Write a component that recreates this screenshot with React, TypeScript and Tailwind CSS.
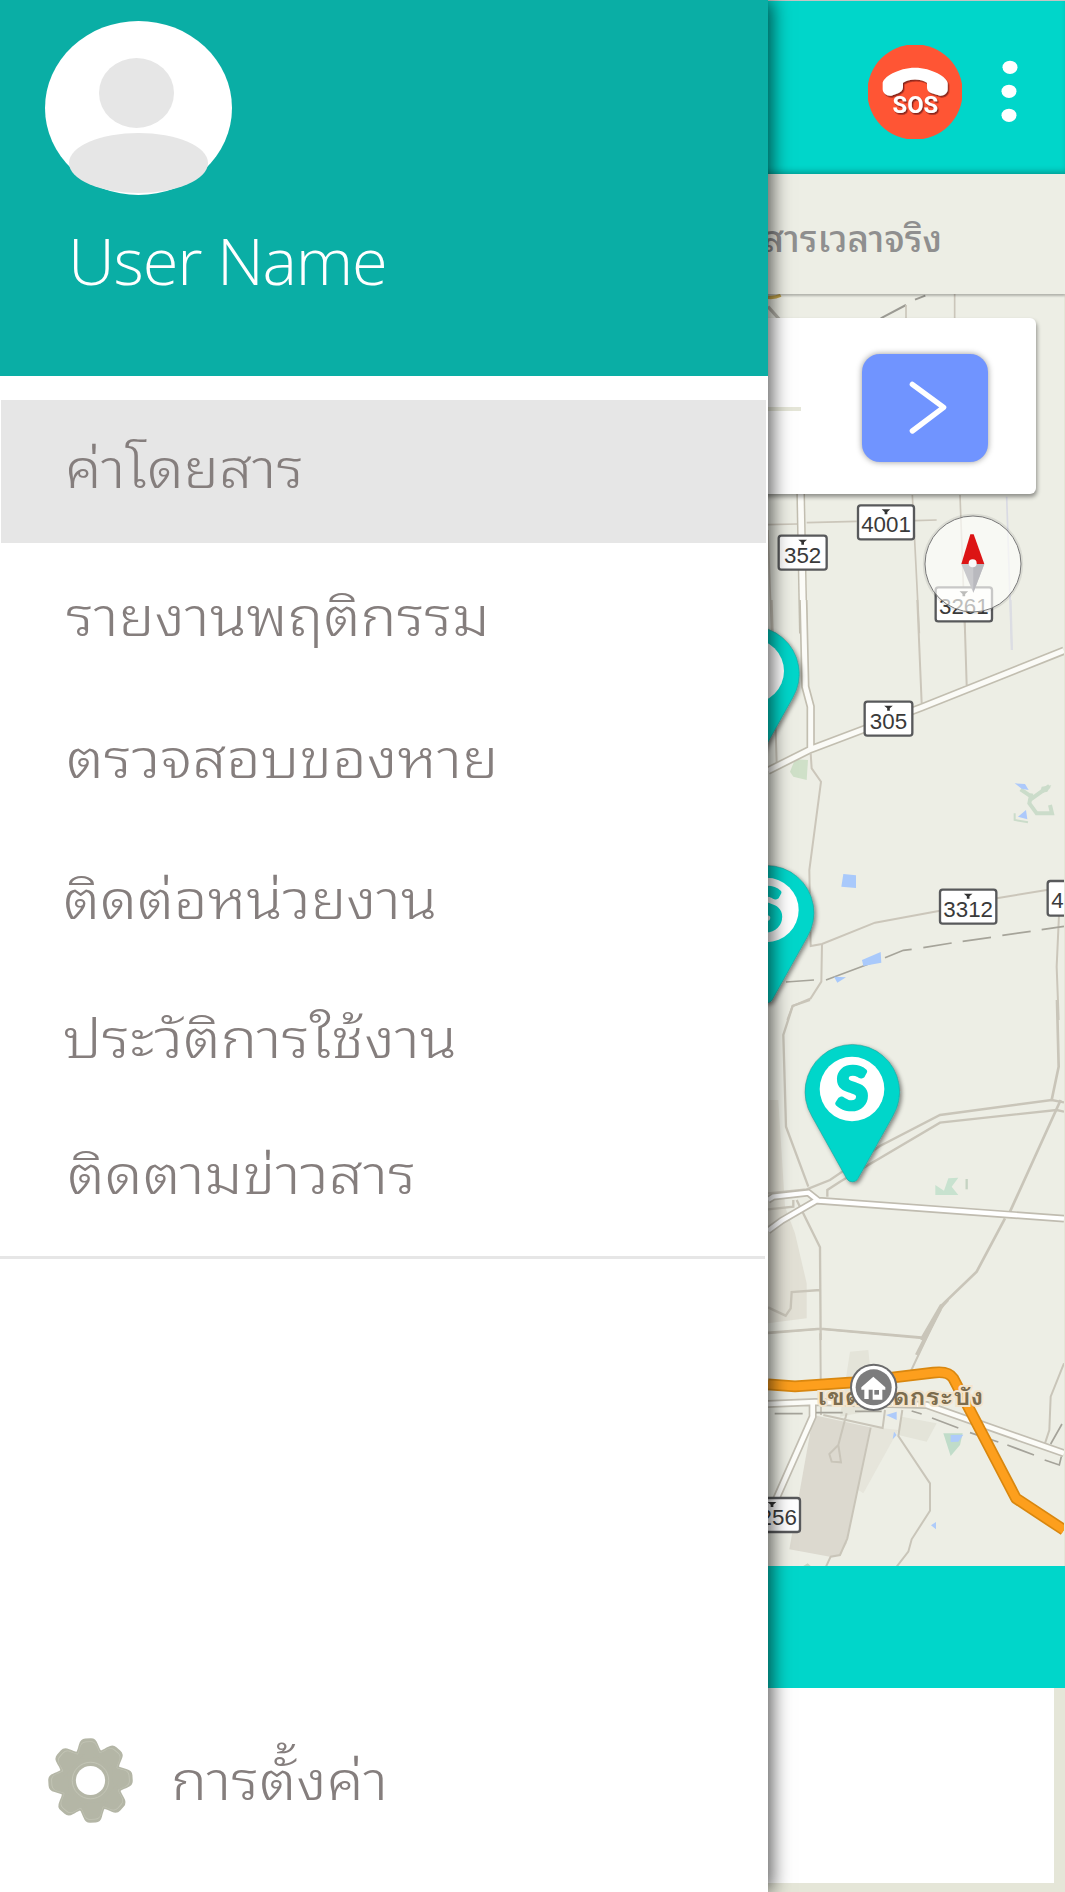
import React from "react";

type MenuItem = { label: string; row: string; text: string };

const items: MenuItem[] = [
  { label: "ค่าโดยสาร", row: "h-[143px] mx-[1px] w-[765px] bg-[#e6e6e6] pl-[64px]", text: "scale-x-[1.1]" },
  { label: "รายงานพฤติกรรม", row: "h-[153px] pl-[66px]", text: "scale-x-[1.121]" },
  { label: "ตรวจสอบของหาย", row: "h-[131px] pl-[66px]", text: "scale-x-[1.132]" },
  { label: "ติดต่อหน่วยงาน", row: "h-[151px] pl-[63px]", text: "scale-x-[1.107]" },
  { label: "ประวัติการใช้งาน", row: "h-[127px] pl-[63px]", text: "scale-x-[1.131]" },
  { label: "ติดตามข่าวสาร", row: "h-[145px] pl-[67px]", text: "scale-x-[1.134]" },
];

function Shield({ x, y, w, label }: { x: number; y: number; w: number; label: string }) {
  return (
    <g transform={`translate(${x} ${y})`}>
      <rect x="2" y="2" width={w - 4} height="102" rx="8" fill="#fff" stroke="#58595b" strokeWidth="7" />
      <path d={`M${w / 2 - 13} 14h26l-9 8v7h-8v-7z`} fill="#333" />
      <text x={w / 2} y="83" textAnchor="middle" fontSize="67" fill="#3a3a3a" className="font-['Liberation_Sans']">
        {label}
      </text>
    </g>
  );
}

function Pin({ x, y, letter }: { x: number; y: number; letter?: string }) {
  return (
    <g transform={`translate(${x} ${y})`}>
      <path
        d="M0 270q-11 0-17-10L-122 72A142 142 0 1 1 122 72L17 260Q11 270 0 270Z"
        fill="#00d6ca"
        stroke="#2b8f89"
        strokeWidth="1.5"
        filter="url(#pinShadow)"
      />
      <circle cx="-1" cy="-9" r="97" fill="#fff" />
      {letter && (
        <text
          x="-1"
          y="52"
          textAnchor="middle"
          fontSize="172"
          fill="#00d6ca"
          stroke="#00d6ca"
          strokeWidth="14"
          strokeLinejoin="round"
          className="font-['Lato'] font-bold"
        >
          {letter}
        </text>
      )}
    </g>
  );
}

function MapCanvas() {
  return (
    <svg className="absolute right-px top-0 h-[1272px] w-[324px]" viewBox="740 294 324 1272" fill="none">
      <defs>
        <filter id="pinShadow" x="-20%" y="-20%" width="140%" height="140%">
          <feDropShadow dx="6" dy="6" stdDeviation="6" floodColor="#000" floodOpacity="0.45" />
        </filter>
      </defs>
      <rect x="740" y="294" width="324" height="1272" fill="#edeee5" />

      {/* northern section */}
      <g transform="translate(740 300) scale(0.33333)" stroke="#cbc6ba" strokeWidth="5">
        <path d="M84 -8Q105 -6 122 -14" stroke="#c9a94e" strokeWidth="10" />
        <path d="M84 20L120 60" strokeWidth="10" stroke="#b5b3aa" />
        <path d="M422 55L498 15M525 -1L556 -13M462 -5" stroke="#9b9a93" strokeWidth="6" />
        <path d="M498 15V60M644 -20V60M462 22" />
        <path d="M84 674L172 672M200 668L350 664M524 662L590 660" />
        <path d="M517 585L528 800L538 1000M660 585L668 800L675 1000M84 690L95 1000" />
        <path d="M800 590L815 1050" stroke="#d9dae3" />
        <path d="M182 580L190 1000" stroke="#c2beb0" strokeWidth="26" />
        <path d="M182 580L190 1000" stroke="#fbfbf7" strokeWidth="17" />
      </g>

      {/* middle section */}
      <g transform="translate(740 600) scale(0.33333)" stroke="#cbc6ba" strokeWidth="6">
        <path d="M150 515L165 478L204 480L200 540L160 530Z" fill="#cfe0c8" stroke="none" />
        <path d="M95 0L110 490M532 0L545 310M674 60L680 255" />
        <path d="M812 0L816 150" stroke="#dcdde3" />
        <path d="M190 0L196 260L212 320V440M84 512L212 448L545 322L972 152" stroke="#c2beb0" strokeWidth="25" />
        <path d="M190 0L196 260L212 320V445M84 512L212 448L545 322L972 152" stroke="#fbfbf7" strokeWidth="15" />
        <path d="M212 460L215 505L243 545L208 810L212 1038L246 1032L405 968L600 932M770 895L920 870L972 866M246 1032L244 1145L212 1195L158 1218L142 1260" />
        <path d="M957 945L950 1100L956 1260" />
        <path d="M138 1146L222 1140M258 1140L410 1083M435 1073L490 1051L515 1048M550 1043L635 1029M668 1024L753 1012M787 1006L872 994M905 989L972 979" stroke="#a6a49a" strokeWidth="5" />
        <g stroke="none">
          <path d="M310 822L348 826V864L304 860ZM366 1080L422 1056L424 1088L370 1098ZM282 1130L318 1132L292 1148Z" fill="#a9c9fb" />
        </g>
        <path d="M842 568L874 590M872 598L928 558M874 580L868 610L890 640L936 640L930 615" stroke="#cbdcca" strokeWidth="12" />
        <path d="M905 560L934 556L922 575L900 580Z" fill="#cbdcca" stroke="none" />
        <path d="M824 640V660L864 667" stroke="#cbdcca" />
        <path d="M824 550L855 552L866 570L845 566ZM858 630L862 658L834 650Z" fill="#adc9fb" stroke="none" />
      </g>

      {/* lower-middle section */}
      <g transform="translate(740 1000) scale(0.33333)" stroke="#c9c5b9" strokeWidth="7">
        <path d="M84 300H115L135 620L165 700L200 850V955L84 970Z" fill="#e2e0d5" stroke="none" />
        <path d="M210 0L158 18L130 105L138 380L205 560M84 580L200 568L270 540L420 438L600 345L935 300L972 307M262 590V570L300 545L600 368L950 330L972 335" />
        <path d="M951 0L956 200L935 300M962 300L810 635M795 655L710 815L606 915L545 1020" strokeWidth="8" />
        <path d="M606 915L545 1020" strokeWidth="13" />
        <path d="M170 600L240 742L242 1020M240 870L155 876L152 925L137 947L84 922M84 998L242 986L545 1012M84 628L160 620V600" />
        <path d="M84 600L100 590L205 578L235 602L972 656M84 692L125 662L235 598" stroke="#c0bcb0" strokeWidth="23" />
        <path d="M84 600L100 590L205 578L235 602L972 656M84 692L125 662L235 598" stroke="#fff" strokeWidth="13" />
        <path d="M586 555L612 572L625 535L655 533L635 560L655 585H586Z" fill="#c8e2cf" stroke="none" />
        <path d="M680 537V568" stroke="#c5d3c2" />
      </g>

      {/* southern section */}
      <g transform="translate(740 1300) scale(0.33333)" stroke="#c9c5b9" strokeWidth="6">
        <g stroke="none">
          <path d="M330 155L385 150L390 200L405 330L300 350Z" fill="#e4e4d9" />
          <path d="M390 380L475 390L370 580L340 560Z" fill="#e6e5db" />
          <path d="M485 350L590 370L560 425L475 405Z" fill="#e4e4d9" />
          <path d="M220 345L390 382L320 730L300 765L270 770L148 748Z" fill="#dcd9cf" />
          <path d="M190 798L203 790L212 798Z" fill="#c9d3c0" />
        </g>
        <path d="M241 100L243 345M84 100L242 87L540 114M625 0L600 28L500 240M487 330L475 408L570 550V632L515 718L505 755L470 800M972 190L932 290L928 390L915 430" />
        <path d="M320 340L295 435L268 462L275 485L303 487L295 435M250 345L428 384L435 330M392 383L322 715L300 765L272 770L258 800" />
        <path d="M600 28L530 165" strokeWidth="11" />
        <path d="M84 312L225 306L560 315L972 460M218 300V350L105 605L84 690" stroke="#c2beb2" strokeWidth="24" />
        <path d="M84 312L225 306L560 315L972 460M218 300V350L105 605L84 690" stroke="#fcfcf8" strokeWidth="14" />
        <path d="M104 341H188M228 338H308M345 334H425M515 333L545 342M576 354L655 384M690 398L775 426M802 435L882 465M914 480L958 495L964 470M932 432L966 372" stroke="#a5a39a" strokeWidth="5" />
        <g stroke="none">
          <path d="M610 400L668 400L660 435L632 468Z" fill="#c0dcc9" />
          <path d="M632 405L670 404L655 425L632 426ZM438 345L470 335V360ZM462 395L470 405L458 418ZM573 676L588 666V688Z" fill="#aecbfa" />
        </g>
        <path d="M84 253L165 259L340 247L580 218Q625 212 640 235L700 350L828 595L972 690" stroke="#d9870f" strokeWidth="35" strokeLinejoin="round" />
        <path d="M84 253L165 259L340 247L580 218Q625 212 640 235L700 350L828 595L972 690" stroke="#fd9f1d" strokeWidth="25" strokeLinejoin="round" />
      </g>

      <text
        x="818"
        y="1405"
        fontSize="23"
        textLength="165"
        lengthAdjust="spacingAndGlyphs"
        fill="#7c6c4e"
        stroke="#f3e4cc"
        strokeWidth="4"
        paintOrder="stroke"
        className="font-['Loma','Noto_Sans_Thai',sans-serif] font-bold"
      >
        เขตลาดกระบัง
      </text>

      <g transform="translate(740 1300) scale(0.33333)">
        <circle cx="401" cy="262" r="71" fill="#6b6b6c" />
        <circle cx="401" cy="262" r="65" fill="#fff" />
        <circle cx="401" cy="262" r="54" fill="#7c7c7d" />
        <path d="M400 230L364 262V269H373V297H386V269H398V299H427V269H436V262Z" fill="#fff" />
        <path d="M403 270H417V284H403Z" fill="#7c7c7d" />
        <Shield x={10} y={592} w={172} label="3256" />
      </g>

      <g transform="translate(740 300) scale(0.33333)">
        <Shield x={352} y={614} w={172} label="4001" />
        <Shield x={114} y={705} w={148} label="352" />
        <Shield x={585} y={860} w={173} label="3261" />
        <circle cx="699" cy="792" r="147" fill="none" stroke="#000" strokeOpacity="0.08" strokeWidth="7" />
        <circle cx="699" cy="792" r="144" fill="#fdfefa" fillOpacity="0.68" stroke="#777" strokeWidth="3" />
        <path d="M664 792L700 878L733 792Z" fill="#c9c9cc" />
        <path d="M700 792V878L733 792Z" fill="#b9b9be" />
        <path d="M691 703H701L733 792H664Z" fill="#dc1414" />
        <circle cx="698" cy="790" r="12" fill="#fafafa" />
      </g>
      <g transform="translate(740 600) scale(0.33333)">
        <Shield x={372} y={303} w={147} label="305" />
        <Shield x={598} y={867} w={173} label="3312" />
        <g>
          <rect x="923" y="843" width="100" height="104" rx="8" fill="#fff" stroke="#58595b" strokeWidth="7" />
          <text x="934" y="924" fontSize="67" fill="#3a3a3a" className="font-['Liberation_Sans']">4</text>
        </g>
        <Pin x={36} y={222} />
        <Pin x={80} y={939} letter="S" />
      </g>
      <g transform="translate(740 1000) scale(0.33333)">
        <Pin x={337} y={276} letter="S" />
      </g>
    </svg>
  );
}

function SosIcon() {
  return (
    <svg className="h-[94px] w-[94px]" viewBox="384 135 282 282">
      <defs>
        <filter id="sosShadow" x="-20%" y="-20%" width="150%" height="150%">
          <feDropShadow dx="4" dy="5" stdDeviation="2" floodColor="#5a1408" floodOpacity="0.7" />
        </filter>
      </defs>
      <circle cx="525" cy="276" r="143" fill="#ff5534" />
      <g fill="#fff" filter="url(#sosShadow)">
        <path d="M428 250C428 232 475 203 525 203C575 203 623 232 623 250V268C623 281 610 288 600 287L576 280C565 277 561 270 561 262V248C540 235 510 235 489 248V262C489 270 482 277 474 280L454 287C441 289 428 280 428 268Z" />
        <text x="526" y="340" textAnchor="middle" fontSize="71" className="font-['Roboto'] font-bold">SOS</text>
      </g>
    </svg>
  );
}

function Avatar() {
  return (
    <svg className="h-[174px] w-[187px]" viewBox="135 63 561 522">
      <ellipse cx="415.5" cy="324" rx="280.5" ry="261" fill="#fff" />
      <ellipse cx="409.5" cy="279" rx="112.5" ry="105" fill="#e6e6e6" />
      <ellipse cx="415.5" cy="489" rx="208.5" ry="90" fill="#e6e6e6" />
    </svg>
  );
}

const TOOTH =
  "M-52 -74C-34 -84 -33 -98 -28 -110Q-23 -127 -8 -127H8Q23 -127 28 -110C33 -98 34 -84 52 -74Z";

function GearShape({ fill, scale }: { fill: string; scale: number }) {
  return (
    <g fill={fill} transform={`scale(${scale})`}>
      <circle r="91" />
      {[0, 45, 90, 135, 180, 225, 270, 315].map((a) => (
        <path key={a} d={TOOTH} transform={`rotate(${a - 3.5})`} />
      ))}
    </g>
  );
}

function Gear() {
  return (
    <svg className="h-[85px] w-[85px]" viewBox="-128 -128 256 256">
      <GearShape fill="#b4b6a6" scale={1} />
      <GearShape fill="#c3c5b6" scale={0.93} />
      <GearShape fill="#b4b6a6" scale={0.91} />
      <circle r="55" fill="none" stroke="#c3c5b6" strokeWidth="3" />
      <circle r="44" fill="#fff" />
    </svg>
  );
}

export default function App() {
  return (
    <div className="relative h-[1892px] w-[1065px] overflow-hidden bg-[#e5e6d8] font-['Noto_Sans_Thai_Looped','Loma','Sarabun','Laksaman','Garuda','Umpush','Waree','Noto_Sans_Thai',sans-serif]">
      <div className="flex h-full flex-col">
        <header className="flex h-[174px] shrink-0 items-start justify-end border-t border-[#c4c4c4] bg-[#00d6ca] pr-[46px] pt-[44px] shadow-[inset_0_-5px_6px_-3px_rgba(0,0,0,0.3)]">
          <SosIcon />
          <svg className="ml-[39px] mt-[14px] h-[66px] w-[18px]" viewBox="784 180 54 198">
            <g fill="#fff">
              <ellipse cx="811" cy="205" rx="22.5" ry="20" />
              <ellipse cx="808" cy="277" rx="22.5" ry="20" />
              <ellipse cx="808" cy="349" rx="22.5" ry="20" />
            </g>
          </svg>
        </header>
        <nav className="relative z-10 flex h-[120px] shrink-0 items-center justify-end bg-[#edeee5] pr-[123px] pt-[3px] shadow-[0_2px_2px_rgba(0,0,0,0.25)]">
          <span className="whitespace-nowrap text-[37px] font-medium text-[#8f8f8f]">สารเวลาจริง</span>
        </nav>
        <main className="relative h-[1272px] shrink-0">
          <MapCanvas />
          <section className="absolute right-[29px] top-[24px] flex h-[176px] w-[400px] items-center justify-end rounded-[6px] bg-white pr-[48px] shadow-[1px_3px_4px_rgba(0,0,0,0.4)]">
            <div className="mr-[61px] mt-[5px] h-[4px] w-[100px] bg-[#e5e6d8]" />
            <button className="mt-[4px] flex h-[108px] w-[126px] items-center justify-center rounded-[18px] bg-[#7094ff] shadow-[0_0_6px_rgba(0,0,0,0.4)]">
              <svg className="ml-[6px] h-[54px] w-[38px]" viewBox="508 244 114 162" fill="none">
                <path d="M518 254L612 323L518 394" stroke="#fff" strokeWidth="16" strokeLinejoin="round" strokeLinecap="round" />
              </svg>
            </button>
          </section>
        </main>
        <div className="h-[122px] shrink-0 bg-[#00d6ca]" />
        <div className="mr-[11px] h-[195px] shrink-0 bg-white" />
      </div>

      <aside className="absolute inset-y-0 left-0 z-20 flex w-[768px] flex-col bg-white shadow-[4px_0_18px_rgba(0,0,0,0.65)]">
        <div className="flex h-[376px] shrink-0 flex-col bg-[#0aaea5] pl-[45px] pt-[21px]">
          <Avatar />
          <h1 className="ml-[23px] mt-[20px] whitespace-nowrap font-['Open_Sans'] text-[65px] font-light leading-[90px] tracking-[-1.2px] text-white">
            User Name
          </h1>
        </div>
        <ul className="mt-[24px] flex flex-col">
          {items.map((it) => (
            <li key={it.label} className={`flex items-center whitespace-nowrap pb-[16px] text-[54px] font-light text-[#857e7d] ${it.row}`}>
              <span className={`inline-block origin-left ${it.text}`}>{it.label}</span>
            </li>
          ))}
        </ul>
        <div className="mt-[6px] h-[3px] w-[765px] bg-[#e6e6e6]" />
        <div className="mt-auto mb-[69px] flex h-[86px] items-center pl-[48px]">
          <Gear />
          <span className="mb-[10px] ml-[38px] inline-block origin-left scale-x-[1.12] whitespace-nowrap text-[54px] font-light text-[#857e7d]">การตั้งค่า</span>
        </div>
      </aside>
    </div>
  );
}
